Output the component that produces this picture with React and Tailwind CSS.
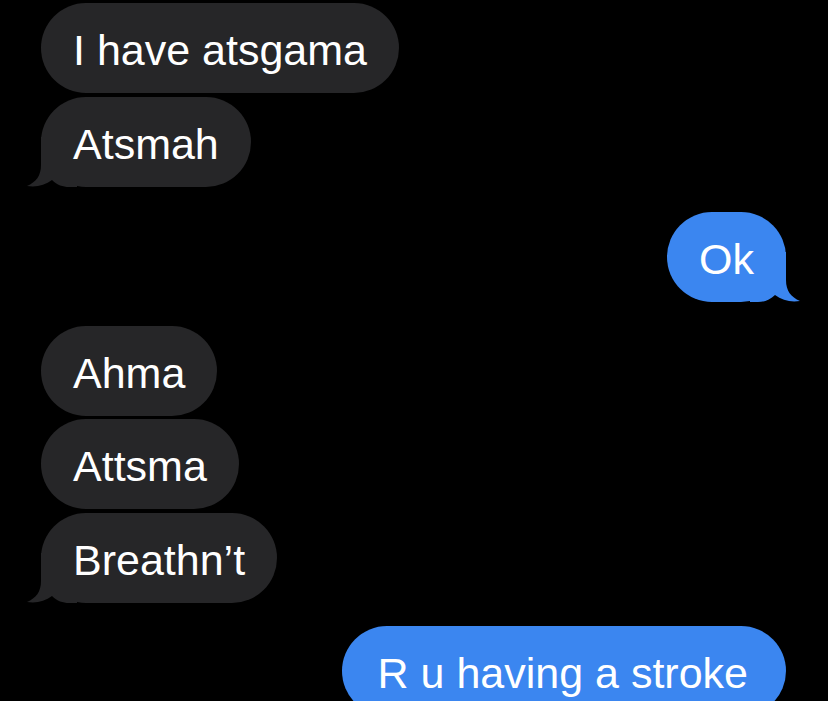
import React from 'react';

const GREY = '#262628';
const BLUE = '#3b86f0';

function Tail({ side, color }) {
  if (side === 'left') {
    return (
      <svg
        className="absolute bottom-0 left-[-14px] pointer-events-none"
        width="50"
        height="50"
        viewBox="0 0 50 50"
      >
        <path
          d="M14,0 L14,28 C14,39 9,45 0,49 C9,50.5 18,48.5 25,43 C30,48 36,50 42,50 L50,50 L50,0 Z"
          fill={color}
        />
      </svg>
    );
  }
  return (
    <svg
      className="absolute bottom-0 right-[-14px] pointer-events-none"
      width="50"
      height="50"
      viewBox="0 0 50 50"
    >
      <path
        d="M36,0 L36,28 C36,39 41,45 50,49 C41,50.5 32,48.5 25,43 C20,48 14,50 8,50 L0,50 L0,0 Z"
        fill={color}
      />
    </svg>
  );
}

function Bubble({ text, me, tail, className = '' }) {
  const color = me ? BLUE : GREY;
  return (
    <div className={`flex ${me ? 'justify-end' : 'justify-start'} ${className}`}>
      <div
        className={`relative h-[90px] pl-8 pr-8 pt-[4px] flex items-center rounded-[45px] text-white text-[43px] leading-none whitespace-nowrap ${
          me ? 'bg-[#3b86f0]' : 'bg-[#262628]'
        }`}
      >
        {tail && <Tail side={me ? 'right' : 'left'} color={color} />}
        <span className="relative">{text}</span>
      </div>
    </div>
  );
}

export default function App() {
  return (
    <div className="w-[828px] h-[705px] bg-white font-['Liberation_Sans',Arial,sans-serif]">
      <div className="h-[701px] bg-black overflow-hidden pl-[41px] pr-[42px] pt-[3px]">
        <Bubble text="I have atsgama" />
        <Bubble text="Atsmah" tail className="mt-[4px]" />
        <Bubble text="Ok" me tail className="mt-[25px]" />
        <Bubble text="Ahma" className="mt-[24px]" />
        <Bubble text="Attsma" className="mt-[3px]" />
        <Bubble text="Breathn’t" tail className="mt-[4px]" />
        <Bubble text="R u having a stroke" me className="mt-[23px] [&>div]:pl-[36px] [&>div]:pr-[38px]" />
      </div>
    </div>
  );
}
